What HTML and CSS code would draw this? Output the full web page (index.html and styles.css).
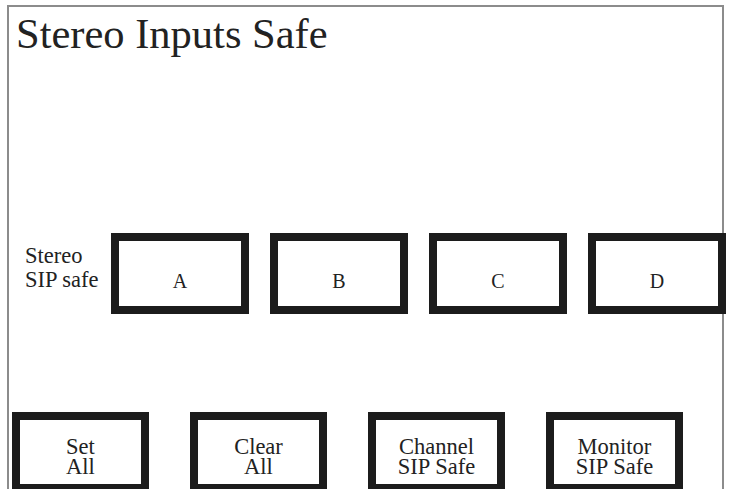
FILE: index.html
```html
<!DOCTYPE html>
<html>
<head>
<meta charset="utf-8">
<link rel="stylesheet" href="styles.css">
</head>
<body>
<div class="frame">
  <h1 class="title">Stereo Inputs Safe</h1>
  <div class="row-top">
    <div class="label">Stereo<br>SIP safe</div>
    <div class="keys">
      <div class="key">A</div>
      <div class="key">B</div>
      <div class="key">C</div>
      <div class="key">D</div>
    </div>
  </div>
  <div class="row-bottom">
    <div class="key2">Set<br>All</div>
    <div class="key2">Clear<br>All</div>
    <div class="key2">Channel<br>SIP Safe</div>
    <div class="key2">Monitor<br>SIP Safe</div>
  </div>
</div>
</body>
</html>
```

FILE: styles.css
```css
html, body {
  margin: 0;
  padding: 0;
  background: #ffffff;
  overflow: hidden;
  height: 489px;
}
body {
  font-family: "Liberation Serif", "Times New Roman", Times, serif;
  color: #222222;
}
.frame {
  margin: 5px 0 0 7px;
  width: 713px;
  height: 484px;
  border: 2px solid #8c8c8c;
  border-bottom: none;
  box-sizing: content-box;
}
.title {
  margin: 0;
  padding: 6px 0 0 7px;
  font-size: 42.5px;
  font-weight: normal;
  line-height: 42px;
}
.row-top {
  display: flex;
  align-items: flex-start;
  margin-top: 178px;
}
.label {
  flex: 0 0 86px;
  margin-left: 16px;
  padding-top: 11px;
  font-size: 22.5px;
  line-height: 24px;
}
.keys {
  display: flex;
  flex: 0 0 auto;
  gap: 21px;
}
.key {
  box-sizing: border-box;
  flex: 0 0 138px;
  height: 81px;
  border: 8px solid #1c1c1c;
  display: flex;
  align-items: center;
  justify-content: center;
  padding-top: 15px;
  font-size: 20px;
  line-height: 23px;
}
.row-bottom {
  display: flex;
  gap: 41px;
  margin-top: 98px;
  margin-left: 3px;
}
.key2 {
  box-sizing: border-box;
  flex: 0 0 137px;
  height: 80px;
  border: 8px solid #1c1c1c;
  display: flex;
  align-items: center;
  justify-content: center;
  text-align: center;
  padding-top: 9px;
  font-size: 22.5px;
  line-height: 20px;
}
```
